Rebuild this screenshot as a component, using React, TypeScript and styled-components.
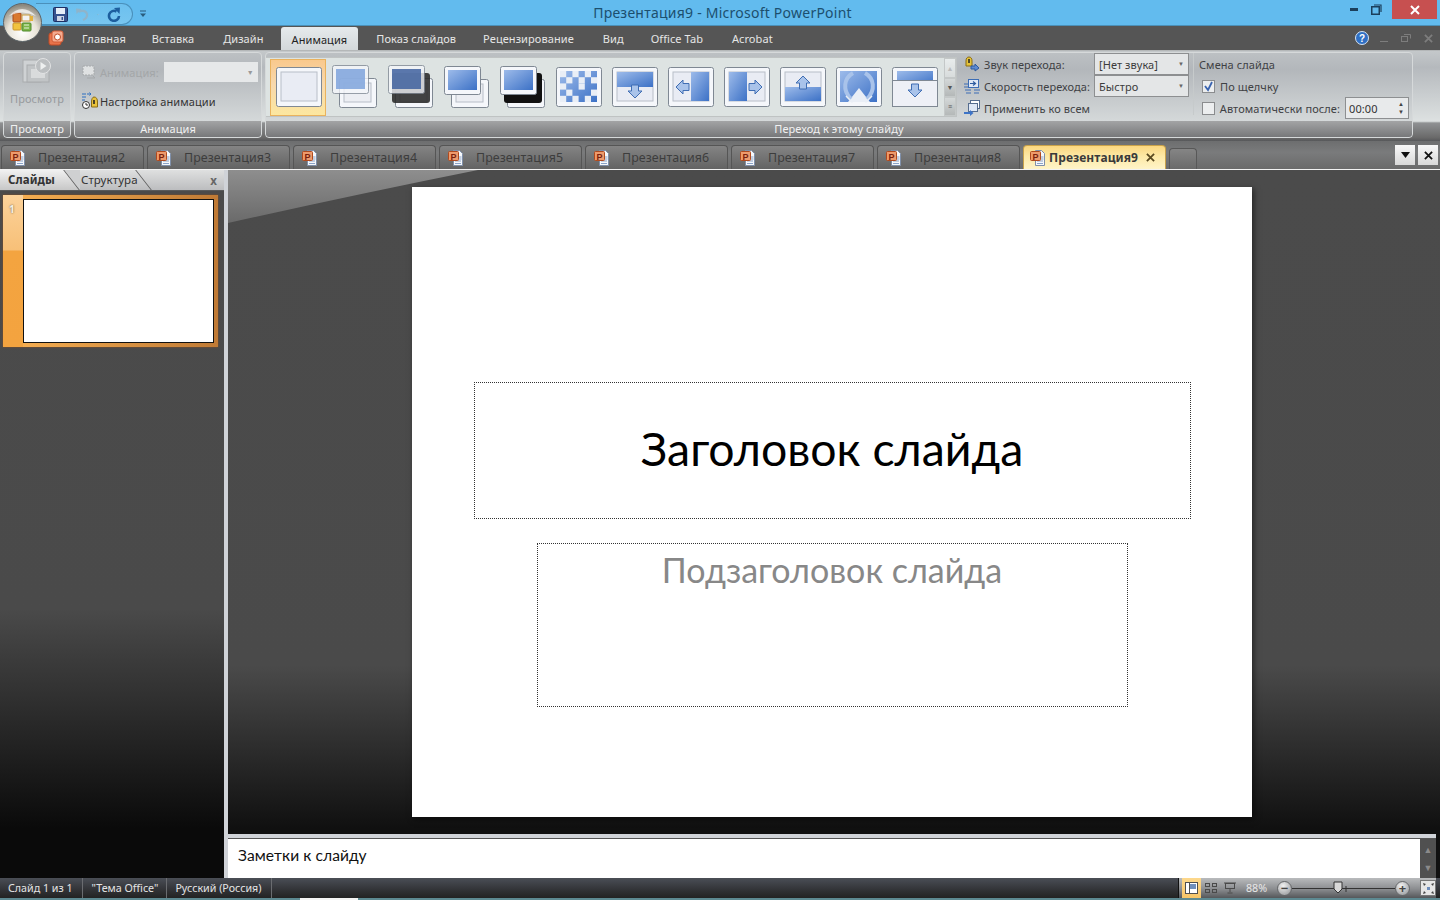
import React from "react";
import styled, { createGlobalStyle } from "styled-components";

const UI_FONT = `"Noto Sans", "Open Sans", "Liberation Sans", sans-serif`;

const GlobalStyle = createGlobalStyle`
  html, body { margin: 0; padding: 0; background: #444; overflow: hidden; }
  #root { width: 1440px; height: 900px; }
  * { box-sizing: border-box; }
`;

const Window = styled.div`
  position: relative;
  width: 1440px;
  height: 900px;
  display: flex;
  flex-direction: column;
  font-family: ${UI_FONT};
  font-size: 11px;
  letter-spacing: 0.08px;
  overflow: hidden;
`;

/* title bar */
const TitleBar = styled.div`
  height: 26px;
  flex: none;
  display: grid;
  grid-template-columns: 1fr auto 1fr;
  background: #62bbee;
  border-bottom: 1px solid #4b90b8;
`;

const Qat = styled.div`
  margin: 2px 0 0 36px;
  display: flex;
  align-items: center;
`;

const QatPill = styled.div`
  width: 97px;
  height: 22px;
  padding-left: 17px;
  display: flex;
  align-items: center;
  gap: 7px;
  border: 1px solid #4a90bb;
  border-left: none;
  border-radius: 0 12px 12px 0;
  background: linear-gradient(#6cc0ef, #78c6f0);
`;

const QatDot = styled.span`
  width: 4px;
  text-align: center;
  color: #8fb9cf;
  font-size: 8px;
`;

const QatMoreSlot = styled.span`
  margin-left: 6px;
  display: flex;
`;

const WindowTitle = styled.div`
  padding-left: 5px;
  font-size: 14px;
  line-height: 26px;
  color: #1c4f6e;
  letter-spacing: 0.24px;
`;

const WindowButtons = styled.div`
  display: flex;
  justify-content: flex-end;
  align-items: flex-start;
  padding-right: 3px;
`;

const WinButton = styled.div<{ $w: number; $close?: boolean }>`
  width: ${(p) => p.$w}px;
  height: 19px;
  margin-left: ${(p) => (p.$close ? 6 : 0)}px;
  display: flex;
  align-items: center;
  justify-content: center;
  background: ${(p) => (p.$close ? "#c75050" : "transparent")};
`;

const Orb = styled.div`
  position: absolute;
  left: 3px;
  top: 3px;
  width: 39px;
  height: 39px;
  z-index: 3;
`;

/* ribbon tabs */
const TabStrip = styled.div`
  height: 24px;
  flex: none;
  display: flex;
  align-items: flex-end;
  padding-left: 48px;
  background: #555555;
`;

const AppIcon = styled.div`
  width: 21px;
  height: 24px;
  display: flex;
  align-items: center;
`;

const RibbonTab = styled.div<{ $active?: boolean; $mr: number }>`
  height: ${(p) => (p.$active ? 23 : 24)}px;
  line-height: ${(p) => (p.$active ? 25 : 26)}px;
  padding: 0 ${(p) => (p.$active ? 11 : 13)}px;
  margin-right: ${(p) => p.$mr}px;
  color: ${(p) => (p.$active ? "#222" : "#e6e6e6")};
  background: ${(p) => (p.$active ? "linear-gradient(#e6eaec, #d3d8da)" : "none")};
  border-radius: 3px 3px 0 0;
  white-space: nowrap;
`;

const TabStripRight = styled.div`
  margin-left: auto;
  height: 24px;
  display: flex;
  align-items: center;
  padding-right: 1px;
`;

const StripButton = styled.div`
  width: 22px;
  height: 20px;
  display: flex;
  align-items: center;
  justify-content: center;
`;

/* ribbon */
const Ribbon = styled.div`
  height: 91px;
  flex: none;
  display: flex;
  gap: 3px;
  padding: 1px 27px 0 3px;
  background: linear-gradient(#c4c8ca, #b5b9bd 18%, #dde1e1 78%, #8f9193 80%, #6a6a6a 96%, #57585a);
  border-top: 1px solid #b4b7b8;
`;

const Group = styled.div<{ $w?: number }>`
  width: ${(p) => (p.$w ? `${p.$w}px` : "auto")};
  flex: ${(p) => (p.$w ? "none" : 1)};
  height: 86px;
  display: flex;
  flex-direction: column;
  border: 1px solid #d6d9da;
  border-radius: 4px;
  overflow: hidden;
  background: linear-gradient(#bcc0c3, #b3b7bb 20%, #dfe3e3);
`;

const GroupBody = styled.div`
  flex: 1;
  min-height: 0;
  display: flex;
`;

const GroupLabel = styled.div`
  height: 16px;
  flex: none;
  line-height: 15px;
  text-align: center;
  color: #f1f1f1;
  background: linear-gradient(#a3a4a5, #77787a);
`;

const PreviewButton = styled.div`
  flex: 1;
  display: flex;
  flex-direction: column;
  align-items: center;
  padding-top: 4px;
  gap: 6px;
  color: #979a9d;
`;

const AnimationRows = styled.div`
  flex: 1;
  display: flex;
  flex-direction: column;
  gap: 7px;
  padding: 8px 0 0 6px;
`;

const ControlRow = styled.div<{ $disabled?: boolean }>`
  height: 22px;
  display: flex;
  align-items: center;
  gap: 1px;
  color: ${(p) => (p.$disabled ? "#a3a6a8" : "#333")};
  white-space: nowrap;
`;

const ControlIconSlot = styled.span`
  width: 18px;
  flex: none;
  display: flex;
`;

const DisabledSelect = styled.div`
  width: 94px;
  height: 20px;
  margin-left: 4px;
  display: flex;
  align-items: center;
  justify-content: flex-end;
  padding-right: 4px;
  background: #e6e8e9;
  color: #999;
  font-size: 7px;
`;

const Gallery = styled.div`
  width: 691px;
  height: 60px;
  margin-top: 4px;
  padding-left: 4px;
  display: flex;
  flex: none;
  background: #dde3e2;
  border: 1px solid #bfc3c3;
  border-left: none;
`;

const ThumbCell = styled.div<{ $selected?: boolean }>`
  width: 56px;
  height: 57px;
  flex: none;
  overflow: hidden;
  margin-top: 1px;
  padding-left: 1px;
  background: ${(p) =>
    p.$selected ? "linear-gradient(#f9c88c, #f8d9ad 45%, #fce79f)" : "transparent"};
  box-shadow: ${(p) => (p.$selected ? "inset 0 0 0 1px #e9b25e" : "none")};
`;

const GalleryScroll = styled.div`
  width: 13px;
  margin-left: 2px;
  display: flex;
  flex-direction: column;
`;

const ScrollStep = styled.div<{ $h: number; $dim?: boolean }>`
  height: ${(p) => p.$h}px;
  display: flex;
  align-items: center;
  justify-content: center;
  font-size: 7px;
  line-height: 1;
  color: ${(p) => (p.$dim ? "#bbb" : "#555")};
  background: ${(p) => (p.$dim ? "linear-gradient(#e8ecec, #d8dcdc)" : "linear-gradient(#d4d8d8, #b4b8b8)")};
  border: 1px solid #c4c8c8;
`;

const TransitionColumn = styled.div`
  width: 225px;
  margin-left: 7px;
  display: grid;
  grid-template-columns: 130px 95px;
  grid-auto-rows: 22px;
  flex: none;
`;

const TransitionLabel = styled.div<{ $span?: boolean }>`
  display: flex;
  align-items: center;
  gap: 4px;
  color: #3f4144;
  white-space: nowrap;
  grid-column: ${(p) => (p.$span ? "1 / 3" : "auto")};
`;

const ComboBox = styled.div`
  display: flex;
  align-items: center;
  justify-content: space-between;
  padding: 0 4px;
  color: #3c3c3c;
  background: #e4e6e7;
  border: 1px solid #8d8f91;
`;

const ComboArrow = styled.span`
  font-size: 6px;
  color: #666;
`;

const AdvanceColumn = styled.div`
  margin-left: 4px;
  padding-left: 5px;
  width: 216px;
  border-left: 1px solid #c6cacb;
  height: 62px;
  display: flex;
  flex-direction: column;
  color: #3f4144;
`;

const AdvanceRow = styled.div`
  height: 22px;
  flex: none;
  display: flex;
  align-items: center;
  gap: 5px;
  white-space: nowrap;
`;

const CheckBox = styled.div`
  width: 13px;
  height: 13px;
  margin-left: 3px;
  display: flex;
  align-items: center;
  justify-content: center;
  background: #eceeef;
  border: 1px solid #8a8c8e;
`;

const Spinner = styled.div`
  width: 65px;
  height: 22px;
  margin-left: auto;
  display: flex;
  align-items: center;
  justify-content: space-between;
  padding: 0 4px 0 3px;
  background: #e8eaeb;
  border: 1px solid #8d8f91;
  color: #333;
`;

const SpinnerArrows = styled.div`
  display: flex;
  flex-direction: column;
  font-size: 6px;
  line-height: 8px;
  color: #444;
`;

/* document tabs */
const DocTabs = styled.div`
  height: 29px;
  flex: none;
  display: flex;
  align-items: flex-end;
  gap: 3px;
  padding: 0 2px 0 1px;
  background: linear-gradient(#6d6e6f, #7a7b7c 40%, #6a6a6a);
  border-bottom: 1px solid #f2f2f2;
`;

const DocTab = styled.div<{ $active?: boolean }>`
  width: 143px;
  height: 24px;
  flex: none;
  display: flex;
  align-items: center;
  padding-left: ${(p) => (p.$active ? 5 : 7)}px;
  gap: ${(p) => (p.$active ? 3 : 12)}px;
  font-size: ${(p) => (p.$active ? 12 : 12.4)}px;
  font-weight: ${(p) => (p.$active ? 700 : 400)};
  color: ${(p) => (p.$active ? "#3a3a3a" : "#3d3d3d")};
  background: ${(p) =>
    p.$active ? "linear-gradient(#fbd77f, #fde9a6 45%, #fff4c8)" : "linear-gradient(#848484, #636363)"};
  border: 1px solid ${(p) => (p.$active ? "#c9a24a" : "#555")};
  border-bottom: none;
  border-radius: 4px 4px 0 0;
  white-space: nowrap;
`;

const NewTab = styled.div`
  width: 28px;
  height: 21px;
  flex: none;
  background: linear-gradient(#858585, #6a6a6a);
  border: 1px solid #585858;
  border-bottom: none;
  border-radius: 4px 4px 0 0;
`;

const DocClose = styled.span`
  margin-left: 5px;
  display: flex;
`;

const DocButtons = styled.div`
  margin-left: auto;
  display: flex;
  gap: 3px;
  align-self: center;
`;

const DocButton = styled.div`
  width: 20px;
  height: 20px;
  display: flex;
  align-items: center;
  justify-content: center;
  background: linear-gradient(#f8f8f8, #d8d8d8);
`;

/* workspace */
const Workspace = styled.div`
  flex: 1;
  min-height: 0;
  display: flex;
`;

const SidePanel = styled.div`
  width: 224px;
  flex: none;
  display: flex;
  flex-direction: column;
  background: linear-gradient(#4b4b4b, #4a4a4a 62%, #0a0a0a 93%);
`;

const SideTabs = styled.div`
  height: 21px;
  flex: none;
  display: flex;
  align-items: center;
  background: linear-gradient(#dfe0e0, #bcbdbf);
  border-bottom: 1px solid #5a5a5a;
  color: #333;
  font-size: 11.5px;
`;

const SideTab = styled.div<{ $active?: boolean; $w: number }>`
  position: relative;
  width: ${(p) => p.$w}px;
  height: 20px;
  margin-left: ${(p) => (p.$active ? 0 : -6)}px;
  padding-left: ${(p) => (p.$active ? 8 : 7)}px;
  line-height: 20px;
  font-weight: ${(p) => (p.$active ? 700 : 400)};
  background: ${(p) => (p.$active ? "linear-gradient(#f1f1f1, #c7c7c7)" : "none")};
  overflow: hidden;

  /* slanted right edge of the tab */
  &::after {
    content: "";
    position: absolute;
    right: 8px;
    top: 0;
    bottom: 0;
    width: 1px;
    background: #5c5c5c;
    transform: skewX(38deg);
  }

  &::before {
    content: "";
    position: absolute;
    right: -10px;
    top: 0;
    bottom: 0;
    width: 18px;
    background: ${(p) => (p.$active ? "#cfd0d1" : "transparent")};
    transform: skewX(38deg);
  }
`;

const SideClose = styled.div`
  margin-left: auto;
  padding-right: 7px;
  font-weight: 700;
  color: #666;
`;

const SlideThumb = styled.div`
  width: 215px;
  height: 152px;
  margin: 4px 0 0 3px;
  display: flex;
  padding: 4px 4px 4px 0;
  background: linear-gradient(90deg, #f4a94a, #f5ad50 9%, #c07a35 100%);
  box-shadow: 0 0 2px #8a4f20;
`;

const ThumbNumber = styled.div`
  width: 20px;
  flex: none;
  margin: -4px 0;
  padding: 7px 0 0 6px;
  font-size: 10px;
  font-weight: 700;
  color: #f6f1e5;
  text-shadow: 0 0 2px #5a4a30;
  background: linear-gradient(#fcd29a, #f7c078 36%, #f3a440 37%, #f3a33f);
`;

const ThumbSlide = styled.div`
  flex: 1;
  background: #fff;
  border: 1px solid #111;
`;

const Splitter = styled.div`
  width: 4px;
  flex: none;
  background: #d0d3d8;
`;

const CenterColumn = styled.div`
  flex: 1;
  min-width: 0;
  display: flex;
  flex-direction: column;
  padding-right: 4px;
  background: linear-gradient(#4b4b4b, #4a4a4a 70%, #101010 93%);
`;

const Editor = styled.div`
  position: relative;
  height: 664px;
  flex: none;
  padding-top: 17px;
  display: flex;
  justify-content: center;
  overflow: hidden;
`;

const EditorWedge = styled.svg`
  position: absolute;
  left: 0;
  top: 0;
`;

const Slide = styled.div`
  position: relative;
  width: 840px;
  height: 630px;
  padding-top: 195px;
  display: flex;
  flex-direction: column;
  align-items: center;
  background: #fff;
  box-shadow: 2px 2px 6px rgba(0, 0, 0, 0.5);
  font-family: Lato, "Open Sans", sans-serif;
  letter-spacing: 0;
`;

const TitlePlaceholder = styled.div`
  width: 717px;
  height: 137px;
  flex: none;
  padding-bottom: 5px;
  display: flex;
  align-items: center;
  justify-content: center;
  border: 1px dotted #333;
  font-size: 46.4px;
  color: #000;
`;

const SubtitlePlaceholder = styled.div`
  width: 591px;
  height: 164px;
  flex: none;
  margin-top: 24px;
  padding-top: 3px;
  text-align: center;
  border: 1px dotted #333;
  font-size: 34px;
  line-height: 46px;
  color: #888;
`;

const HSplitter = styled.div`
  height: 5px;
  flex: none;
  background: #d0d3d8;
  border-bottom: 1px solid #555;
`;

const NotesRow = styled.div`
  flex: 1;
  min-height: 0;
  display: flex;
`;

const Notes = styled.div`
  flex: 1;
  padding: 6px 10px;
  background: #fff;
  color: #111;
  font-family: Lato, "Open Sans", sans-serif;
  font-size: 15.6px;
  line-height: 20px;
`;

const NotesScroll = styled.div`
  width: 16px;
  flex: none;
  display: flex;
  flex-direction: column;
  align-items: center;
  justify-content: space-between;
  padding: 4px 0;
  background: #505050;
  color: #8a8a8a;
  font-size: 9px;
`;

/* status bar */
const StatusBar = styled.div`
  position: relative;
  height: 22px;
  flex: none;
  display: flex;
  align-items: stretch;
  color: #e4e4e4;
  font-size: 10.7px;
  letter-spacing: 0;
  background: linear-gradient(#4a4e56, #2f3033 60%, #232323 90%, #5d8a92 90%);
`;

const StatusNub = styled.div`
  position: absolute;
  left: 300px;
  bottom: 0;
  width: 58px;
  height: 2px;
  background: #f4f4f4;
`;

const StatusItem = styled.div`
  height: 20px;
  padding: 0 9px;
  display: flex;
  align-items: center;
  border-right: 1px solid #6a6c70;

  &:first-child {
    padding-left: 8px;
  }

  &:nth-child(2) {
    padding-right: 8px;
  }

  &:nth-child(3) {
    padding-left: 8px;
  }
`;

const StatusRight = styled.div`
  margin: 0 4px 2px auto;
  width: 258px;
  height: 20px;
  display: flex;
  align-items: center;
  background: linear-gradient(#b9bbbd, #8b8d90 55%, #55575a);
  border-left: 1px solid #111;
`;

const ViewButton = styled.div<{ $active?: boolean }>`
  width: 19px;
  height: 20px;
  display: flex;
  align-items: center;
  justify-content: center;
  background: ${(p) => (p.$active ? "linear-gradient(#fdd88c, #f6c568)" : "none")};
`;

const ViewButtons = styled.div`
  display: flex;
  margin: 0 7px 0 3px;
`;

const ZoomValue = styled.div`
  width: 31px;
  color: #e8e8e8;
`;

const ZoomTrack = styled.div`
  position: relative;
  width: 103px;
  height: 1px;
  background: #333;
`;

const ZoomThumb = styled.div`
  position: absolute;
  left: 41px;
  top: -7px;
`;

const ZoomCircle = styled.div`
  width: 15px;
  height: 15px;
  flex: none;
  border-radius: 50%;
  display: flex;
  align-items: center;
  justify-content: center;
  background: radial-gradient(circle at 40% 30%, #f2f2f2, #8d8f92);
  border: 1px solid #66686a;
  color: #444;
  font-size: 13px;
  font-weight: 700;
  line-height: 1;
`;

const FitButton = styled.div`
  width: 16px;
  height: 16px;
  margin-left: 10px;
  background: #e6e6e6;
  border: 1px solid #777;
  display: flex;
  align-items: center;
  justify-content: center;
`;

/* drawings */
const OrbIcon = () => (
  <svg width="39" height="39" viewBox="0 0 39 39">
    <defs>
      <radialGradient id="orb" cx="50%" cy="75%" r="70%">
        <stop offset="0" stopColor="#ffffff" />
        <stop offset="0.55" stopColor="#e9e4d8" />
        <stop offset="1" stopColor="#8d8a80" />
      </radialGradient>
    </defs>
    <circle cx="19.5" cy="19.5" r="19" fill="url(#orb)" stroke="#5d6468" />
    <rect x="10" y="10" width="8" height="9" rx="1" fill="#d9792f" stroke="#a5491c" />
    <rect x="19" y="12" width="8" height="6" fill="#f3f3f3" stroke="#c99b3c" />
    <rect x="27" y="13" width="3" height="5" fill="#e5b23d" />
    <rect x="10" y="20" width="8" height="7" rx="1" fill="#f1c33e" stroke="#c9962a" />
    <rect x="19" y="20" width="9" height="8" rx="1" fill="#7cb548" stroke="#4e8a2a" />
    <path d="M21 22h5M21 25h5" stroke="#e6f3d8" />
    <path d="M6 13 Q19 -1 33 13 Q19 6 6 13Z" fill="#fff" opacity="0.7" />
  </svg>
);

const SaveIcon = () => (
  <svg width="15" height="15" viewBox="0 0 15 15">
    <rect x="0.5" y="0.5" width="14" height="14" rx="1" fill="#35528f" stroke="#1e2f63" />
    <rect x="3" y="1" width="9" height="6" fill="#e6eef8" />
    <rect x="4" y="9" width="7" height="5" fill="#cdd6e6" />
    <rect x="8.5" y="10" width="1.5" height="3" fill="#35528f" />
  </svg>
);

const UndoIcon = () => (
  <svg width="14" height="14" viewBox="0 0 14 14">
    <path d="M1 1.5 6.500 2 1.500 7z" fill="#8fb4ca" />
    <path d="M3.500 5C6 3 11 3.500 12 7 12.500 10 10.500 12 8 13" fill="none" stroke="#8fb4ca" strokeWidth="2.2" />
  </svg>
);

const RedoIcon = () => (
  <svg width="14" height="15" viewBox="0 0 14 15">
    <path d="M9.500 4.500A5 5 0 1 0 12 9" fill="none" stroke="#1d5e9e" strokeWidth="2.6" />
    <path d="M7 1 13 0.500 12.500 7z" fill="#1d5e9e" />
  </svg>
);

const QatMore = () => (
  <svg width="8" height="8" viewBox="0 0 8 8">
    <path d="M1 1h6" stroke="#2a5d7d" />
    <path d="M1 3.5h6L4 7z" fill="#2a5d7d" />
  </svg>
);

const MinGlyph = () => (
  <svg width="8" height="3">
    <rect width="8" height="3" fill="#1b3f5c" />
  </svg>
);

const RestoreGlyph = () => (
  <svg width="11" height="11" viewBox="0 0 11 11" fill="none" stroke="#1b3f5c">
    <rect x="0.75" y="2.75" width="7.5" height="7.5" strokeWidth="1.5" />
    <path d="M3 1h7v7" strokeWidth="1.2" />
  </svg>
);

const CloseGlyph = ({ size = 10, color = "#fff", width = 2 }: { size?: number; color?: string; width?: number }) => (
  <svg width={size} height={size} viewBox="0 0 10 10">
    <path d="M1 1l8 8M9 1l-8 8" stroke={color} strokeWidth={width} />
  </svg>
);

const AppTabIcon = () => (
  <svg width="16" height="16" viewBox="0 0 16 16">
    <rect x="1" y="3" width="12" height="12" rx="2" fill="#e8734a" stroke="#c04a24" />
    <rect x="4" y="1" width="11" height="11" rx="2" fill="#f4ab90" stroke="#d25b34" />
    <circle cx="9.5" cy="7" r="3" fill="#fff" stroke="#c04a24" />
  </svg>
);

const HelpIcon = () => (
  <svg width="14" height="14" viewBox="0 0 14 14">
    <circle cx="7" cy="7" r="6.5" fill="#2f6fc4" stroke="#d6e4f5" />
    <text x="7" y="10.5" textAnchor="middle" fontSize="10" fontWeight="700" fill="#fff" fontFamily="Liberation Sans">?</text>
  </svg>
);

const StripMin = () => (
  <svg width="9" height="9">
    <rect x="0" y="7" width="8" height="1" fill="#7d7d7d" />
  </svg>
);

const StripRestore = () => (
  <svg width="10" height="8" viewBox="0 0 10 8" fill="none" stroke="#7d7d7d">
    <rect x="0.500" y="2.500" width="6" height="5" />
    <path d="M3 0.500h6.500v4" />
  </svg>
);

const PreviewIcon = () => (
  <svg width="30" height="28" viewBox="0 0 30 28">
    <rect x="1" y="3" width="18" height="22" fill="#cfd2d4" stroke="#a9acae" />
    <rect x="5" y="8" width="22" height="17" fill="#c1c4c6" stroke="#a9acae" />
    <rect x="9" y="12" width="14" height="9" fill="#d9dbdc" />
    <circle cx="21" cy="9" r="7.5" fill="#bcbfc1" stroke="#e2e3e4" />
    <path d="M18.5 5v8l6-4z" fill="#eef0f0" />
  </svg>
);

const AnimIcon = () => (
  <svg width="17" height="16" viewBox="0 0 17 16">
    <rect x="2" y="2" width="11" height="9" fill="#dfe1e2" stroke="#a6a9ab" strokeDasharray="2 1" />
    <path d="M6 14h8l-2-2" fill="none" stroke="#a6a9ab" />
  </svg>
);

const CustomAnimIcon = () => (
  <svg width="18" height="18" viewBox="0 0 18 18">
    <path d="M1 2h4M1 5h4M1 8h3" stroke="#2d6fc0" />
    <path d="M6 2h4l-1.5-1.5M10 2l-1.5 1.5" stroke="#2d6fc0" fill="none" />
    <circle cx="5" cy="13" r="3.5" fill="#fff" stroke="#333" />
    <path d="M5 11v2h2" stroke="#333" fill="none" />
    <path d="M13 5c2.5 0 3.5 2 3.5 5v5h-6v-5c0-3 1-5 2.5-5z" fill="#e9c23c" stroke="#8a6c14" />
    <path d="M13 8v4" stroke="#222" strokeWidth="1.6" />
  </svg>
);

const SoundIcon = () => (
  <svg width="16" height="16" viewBox="0 0 16 16">
    <path d="M5 1c2 0 3 1.5 3 4v5H2V5c0-2.500 1-4 3-4z" fill="#e5c33a" stroke="#8a6c14" />
    <path d="M5 3v4" stroke="#222" strokeWidth="1.5" />
    <path d="M7 10h4v-2l4 4-4 3v-2H7z" fill="#5d8ad0" stroke="#2d5ba0" />
  </svg>
);

const SpeedIcon = () => (
  <svg width="16" height="16" viewBox="0 0 16 16">
    <rect x="4.500" y="1.500" width="10" height="8" fill="#dfe8f6" stroke="#3c6db5" />
    <path d="M6 5.500h5M9 3.500l2.500 2-2.500 2" stroke="#2d5ba0" fill="none" strokeWidth="1.2" />
    <path d="M0 6h4M0 9h4M1 12h6M10 12h6M2 15h5M10 15h5" stroke="#3c6db5" />
  </svg>
);

const ApplyIcon = () => (
  <svg width="16" height="16" viewBox="0 0 16 16">
    <rect x="6.500" y="0.500" width="9" height="8" fill="#fff" stroke="#566d8f" />
    <rect x="4.500" y="3.500" width="9" height="8" fill="#dfe8f6" stroke="#566d8f" />
    <path d="M0 12h6v-2l3.500 3-3.500 3v-2H0z" fill="#3d74c7" />
  </svg>
);

const TickIcon = () => (
  <svg width="11" height="11" viewBox="0 0 11 11">
    <path d="M2 5l3 4 4-8" fill="none" stroke="#3a64b0" strokeWidth="1.8" />
  </svg>
);

const PptDocIcon = () => (
  <svg width="17" height="18" viewBox="0 0 17 18">
    <path d="M6.500 1.500h6l3 3v12h-9z" fill="#f6f8fb" stroke="#7f8fa9" />
    <path d="M8 12h6M8 14.500h6M12 8h2.500M12 10h2.500" stroke="#8ba3c8" />
    <rect x="1.500" y="2.500" width="10" height="9" rx="1" fill="#ee9a6c" stroke="#b04a1e" />
    <text x="6.500" y="10.500" textAnchor="middle" fontSize="9" fontWeight="700" fill="#7c1f0c" fontFamily="Liberation Sans">P</text>
  </svg>
);

const DownGlyph = () => (
  <svg width="9" height="6" viewBox="0 0 9 6">
    <path d="M0 0h9L4.500 6z" fill="#111" />
  </svg>
);

type ThumbKind = "plain" | "fade" | "fadeBlack" | "push" | "pushBlack" | "dissolve" | "down" | "left" | "right" | "up" | "wheel" | "cover";

const Frame = ({ x, y, w, h, opacity = 1 }: { x: number; y: number; w: number; h: number; opacity?: number }) => (
  <rect x={x + 0.5} y={y + 0.5} width={w} height={h} rx="2" fill="#f5f7fb" stroke="#7f8893" opacity={opacity} />
);

const Arrow = ({ x, y, dir }: { x: number; y: number; dir: number }) => (
  <path
    d="M-3.500 -6h7v6h3.500L0 7-7 0h3.500z"
    transform={`translate(${x} ${y}) rotate(${dir})`}
    fill="#a9c3ea"
    stroke="#3f6db3"
  />
);

// light squares of the dissolve preview, one string per row
const DISSOLVE = ["1.1.1.", ".1.1.1", "1..1..", ".1...1", "1.1.1."];

// one gallery preview, drawn in a 56x57 cell
const TransitionThumb = ({ kind }: { kind: ThumbKind }) => {
  const grad = `grad-${kind}`;
  const blue = `url(#${grad})`;
  const inner = <rect x="10" y="13" width="36" height="29" fill="#e9ecf4" stroke="#b8bec8" />;
  return (
    <svg width="56" height="57" viewBox="0 0 56 57">
      <defs>
        <linearGradient id={grad} x1="0" y1="0" x2="1" y2="1">
          <stop offset="0" stopColor="#9dbbea" />
          <stop offset="1" stopColor="#3c71c6" />
        </linearGradient>
      </defs>
      {kind === "plain" && (
        <>
          <Frame x={5} y={8} w={45} h={39} />
          {inner}
        </>
      )}
      {(kind === "fade" || kind === "fadeBlack") && (
        <>
          <Frame x={12} y={19} w={37} h={29} />
          <rect x="17" y="24" width="27" height="19" fill="#eceef3" stroke="#b8bec8" />
          {kind === "fadeBlack" && <rect x="9" y="14" width="38" height="30" rx="3" fill="#2f2f2f" opacity="0.9" />}
          <Frame x={5} y={6} w={36} h={28} opacity={0.78} />
          <rect x="9" y="10" width="29" height="20" fill={kind === "fade" ? "#7ea3dc" : "#3f629f"} opacity="0.85" />
        </>
      )}
      {(kind === "push" || kind === "pushBlack") && (
        <>
          <Frame x={12} y={20} w={37} h={28} />
          {kind === "push" && <rect x="17" y="25" width="27" height="18" fill="#eceef3" stroke="#b8bec8" />}
          {kind === "pushBlack" && <rect x="9" y="14" width="38" height="30" rx="3" fill="#111" />}
          <Frame x={5} y={7} w={36} h={28} />
          <rect x="9" y="11" width="29" height="20" fill={blue} />
        </>
      )}
      {kind === "dissolve" && (
        <>
          <Frame x={5} y={8} w={45} h={39} />
          <rect x="9" y="12" width="37" height="31" fill={blue} />
          {DISSOLVE.map((row, r) =>
            row.split("").map((c, i) =>
              c === "1" ? <rect key={`${r}-${i}`} x={9 + i * 6.2} y={12 + r * 6.2} width="6.2" height="6.2" fill="#e9eef6" /> : null
            )
          )}
        </>
      )}
      {kind === "down" && (
        <>
          <Frame x={5} y={8} w={45} h={39} />
          {inner}
          <rect x="10" y="13" width="36" height="15" fill={blue} />
          <Arrow x={28} y={32} dir={0} />
        </>
      )}
      {kind === "left" && (
        <>
          <Frame x={5} y={8} w={45} h={39} />
          {inner}
          <rect x="28" y="13" width="18" height="29" fill={blue} />
          <Arrow x={20} y={28} dir={90} />
        </>
      )}
      {kind === "right" && (
        <>
          <Frame x={5} y={8} w={45} h={39} />
          {inner}
          <rect x="10" y="13" width="18" height="29" fill={blue} />
          <Arrow x={36} y={28} dir={-90} />
        </>
      )}
      {kind === "up" && (
        <>
          <Frame x={5} y={8} w={45} h={39} />
          {inner}
          <rect x="10" y="28" width="36" height="14" fill={blue} />
          <Arrow x={28} y={24} dir={180} />
        </>
      )}
      {kind === "wheel" && (
        <>
          <Frame x={5} y={8} w={45} h={39} />
          <rect x="9" y="12" width="37" height="31" fill={blue} />
          <path d="M28 29 17 43h22z" fill="#e9eef6" />
          <path d="M20 40C11 31 13 19 22 14M36 40C45 31 43 19 34 14" fill="none" stroke="#a9c3ea" strokeWidth="4" />
          <path d="M15 37l6 6 5-5M30 38l5 5 6-6" fill="none" stroke="#e9eef6" strokeWidth="1.5" />
        </>
      )}
      {kind === "cover" && (
        <>
          <Frame x={5} y={8} w={45} h={39} />
          <rect x="10" y="12" width="36" height="14" fill={blue} />
          <rect x="5.500" y="21.500" width="45" height="26" fill="#eef0f6" stroke="#7f8893" />
          <Arrow x={28} y={31} dir={0} />
        </>
      )}
    </svg>
  );
};

const ViewNormal = () => (
  <svg width="13" height="12" viewBox="0 0 13 12">
    <rect x="0.500" y="0.500" width="12" height="11" fill="#fff" stroke="#4f4f4f" />
    <rect x="5" y="2" width="6" height="5" fill="#6f8ebc" />
    <path d="M4.500 0v12" stroke="#4f4f4f" />
  </svg>
);

const ViewSorter = () => (
  <svg width="12" height="12" viewBox="0 0 12 12" fill="none" stroke="#4a4a4a">
    <rect x="0.500" y="1.500" width="4" height="3" />
    <rect x="7.500" y="1.500" width="4" height="3" />
    <rect x="0.500" y="7.500" width="4" height="3" />
    <rect x="7.500" y="7.500" width="4" height="3" />
  </svg>
);

const ViewShow = () => (
  <svg width="12" height="12" viewBox="0 0 12 12" fill="none" stroke="#4a4a4a">
    <path d="M0 1h12" />
    <rect x="1.500" y="1.500" width="9" height="5" />
    <path d="M6 7v3M3.500 11h5" />
  </svg>
);

const ZoomHandle = () => (
  <svg width="20" height="14" viewBox="0 0 20 14">
    <path d="M1 1h8v7l-4 4-4-4z" fill="#d8d8d8" stroke="#333" />
    <path d="M13 5v6" stroke="#333" />
  </svg>
);

const FitIcon = () => (
  <svg width="11" height="11" viewBox="0 0 11 11">
    <path d="M0 0l3 1-2 2zM11 0l-1 3-2-2zM0 11l1-3 2 2zM11 11l-3-1 2-2z" fill="#444" />
    <rect x="4" y="4" width="3" height="3" fill="#6f8ebc" />
  </svg>
);

const MenuTabs: { label: string; mr: number }[] = [
  { label: "Главная", mr: 0 },
  { label: "Вставка", mr: 3 },
  { label: "Дизайн", mr: 4 },
  { label: "Анимация", mr: 5 },
  { label: "Показ слайдов", mr: 1 },
  { label: "Рецензирование", mr: 3 },
  { label: "Вид", mr: 1 },
  { label: "Office Tab", mr: 3 },
  { label: "Acrobat", mr: 0 },
];

const Thumbs: ThumbKind[] = ["plain", "fade", "fadeBlack", "push", "pushBlack", "dissolve", "down", "left", "right", "up", "wheel", "cover"];

const Documents = [2, 3, 4, 5, 6, 7, 8];

export default function App() {
  return (
    <Window>
      <GlobalStyle />
      <Orb>
        <OrbIcon />
      </Orb>

      <TitleBar>
        <Qat>
          <QatPill>
            <SaveIcon />
            <UndoIcon />
            <QatDot>·</QatDot>
            <RedoIcon />
          </QatPill>
          <QatMoreSlot>
            <QatMore />
          </QatMoreSlot>
        </Qat>
        <WindowTitle>Презентация9 - Microsoft PowerPoint</WindowTitle>
        <WindowButtons>
          <WinButton $w={25}>
            <MinGlyph />
          </WinButton>
          <WinButton $w={20}>
            <RestoreGlyph />
          </WinButton>
          <WinButton $w={45} $close>
            <CloseGlyph />
          </WinButton>
        </WindowButtons>
      </TitleBar>

      <TabStrip>
        <AppIcon>
          <AppTabIcon />
        </AppIcon>
        {MenuTabs.map((t) => (
          <RibbonTab key={t.label} $active={t.label === "Анимация"} $mr={t.mr}>
            {t.label}
          </RibbonTab>
        ))}
        <TabStripRight>
          <StripButton>
            <HelpIcon />
          </StripButton>
          <StripButton>
            <StripMin />
          </StripButton>
          <StripButton>
            <StripRestore />
          </StripButton>
          <StripButton>
            <CloseGlyph size={9} color="#7d7d7d" />
          </StripButton>
        </TabStripRight>
      </TabStrip>

      <Ribbon>
        <Group $w={68}>
          <GroupBody>
            <PreviewButton>
              <PreviewIcon />
              <span>Просмотр</span>
            </PreviewButton>
          </GroupBody>
          <GroupLabel>Просмотр</GroupLabel>
        </Group>
        <Group $w={188}>
          <GroupBody>
            <AnimationRows>
              <ControlRow $disabled>
                <ControlIconSlot>
                  <AnimIcon />
                </ControlIconSlot>
                <span>Анимация:</span>
                <DisabledSelect>▼</DisabledSelect>
              </ControlRow>
              <ControlRow>
                <ControlIconSlot>
                  <CustomAnimIcon />
                </ControlIconSlot>
                <span>Настройка анимации</span>
              </ControlRow>
            </AnimationRows>
          </GroupBody>
          <GroupLabel>Анимация</GroupLabel>
        </Group>
        <Group>
          <GroupBody>
            <Gallery>
              {Thumbs.map((k, i) => (
                <ThumbCell key={k} $selected={i === 0}>
                  <TransitionThumb kind={k} />
                </ThumbCell>
              ))}
              <GalleryScroll>
                <ScrollStep $h={20} $dim>▲</ScrollStep>
                <ScrollStep $h={19}>▼</ScrollStep>
                <ScrollStep $h={19}>≡</ScrollStep>
              </GalleryScroll>
            </Gallery>
            <TransitionColumn>
              <TransitionLabel>
                <SoundIcon />
                Звук перехода:
              </TransitionLabel>
              <ComboBox>
                [Нет звука]
                <ComboArrow>▼</ComboArrow>
              </ComboBox>
              <TransitionLabel>
                <SpeedIcon />
                Скорость перехода:
              </TransitionLabel>
              <ComboBox>
                Быстро
                <ComboArrow>▼</ComboArrow>
              </ComboBox>
              <TransitionLabel $span>
                <ApplyIcon />
                Применить ко всем
              </TransitionLabel>
            </TransitionColumn>
            <AdvanceColumn>
              <AdvanceRow>Смена слайда</AdvanceRow>
              <AdvanceRow>
                <CheckBox>
                  <TickIcon />
                </CheckBox>
                По щелчку
              </AdvanceRow>
              <AdvanceRow>
                <CheckBox />
                Автоматически после:
                <Spinner>
                  00:00
                  <SpinnerArrows>
                    <span>▲</span>
                    <span>▼</span>
                  </SpinnerArrows>
                </Spinner>
              </AdvanceRow>
            </AdvanceColumn>
          </GroupBody>
          <GroupLabel>Переход к этому слайду</GroupLabel>
        </Group>
      </Ribbon>

      <DocTabs>
        {Documents.map((n) => (
          <DocTab key={n}>
            <PptDocIcon />
            Презентация{n}
          </DocTab>
        ))}
        <DocTab $active>
          <PptDocIcon />
          Презентация9
          <DocClose>
            <CloseGlyph size={9} color="#5a4a20" />
          </DocClose>
        </DocTab>
        <NewTab />
        <DocButtons>
          <DocButton>
            <DownGlyph />
          </DocButton>
          <DocButton>
            <CloseGlyph size={9} color="#111" />
          </DocButton>
        </DocButtons>
      </DocTabs>

      <Workspace>
        <SidePanel>
          <SideTabs>
            <SideTab $active $w={80}>Слайды</SideTab>
            <SideTab $w={78}>Структура</SideTab>
            <SideClose>x</SideClose>
          </SideTabs>
          <SlideThumb>
            <ThumbNumber>1</ThumbNumber>
            <ThumbSlide />
          </SlideThumb>
        </SidePanel>
        <Splitter />
        <CenterColumn>
          <Editor>
            <EditorWedge width="270" height="60" viewBox="0 0 270 60">
              <defs>
                <linearGradient id="wedge" x1="0" y1="0" x2="0" y2="1">
                  <stop offset="0" stopColor="#8e8e8e" />
                  <stop offset="1" stopColor="#6a6a6a" />
                </linearGradient>
              </defs>
              <path d="M0 0H250Q130 24 0 53Z" fill="url(#wedge)" />
            </EditorWedge>
            <Slide>
              <TitlePlaceholder>Заголовок слайда</TitlePlaceholder>
              <SubtitlePlaceholder>Подзаголовок слайда</SubtitlePlaceholder>
            </Slide>
          </Editor>
          <HSplitter />
          <NotesRow>
            <Notes>Заметки к слайду</Notes>
            <NotesScroll>
              <span>▲</span>
              <span>▼</span>
            </NotesScroll>
          </NotesRow>
        </CenterColumn>
      </Workspace>

      <StatusBar>
        <StatusItem>Слайд 1 из 1</StatusItem>
        <StatusItem>"Тема Office"</StatusItem>
        <StatusItem>Русский (Россия)</StatusItem>
        <StatusNub />
        <StatusRight>
          <ViewButtons>
            <ViewButton $active>
              <ViewNormal />
            </ViewButton>
            <ViewButton>
              <ViewSorter />
            </ViewButton>
            <ViewButton>
              <ViewShow />
            </ViewButton>
          </ViewButtons>
          <ZoomValue>88%</ZoomValue>
          <ZoomCircle>−</ZoomCircle>
          <ZoomTrack>
            <ZoomThumb>
              <ZoomHandle />
            </ZoomThumb>
          </ZoomTrack>
          <ZoomCircle>+</ZoomCircle>
          <FitButton>
            <FitIcon />
          </FitButton>
        </StatusRight>
      </StatusBar>
    </Window>
  );
}
